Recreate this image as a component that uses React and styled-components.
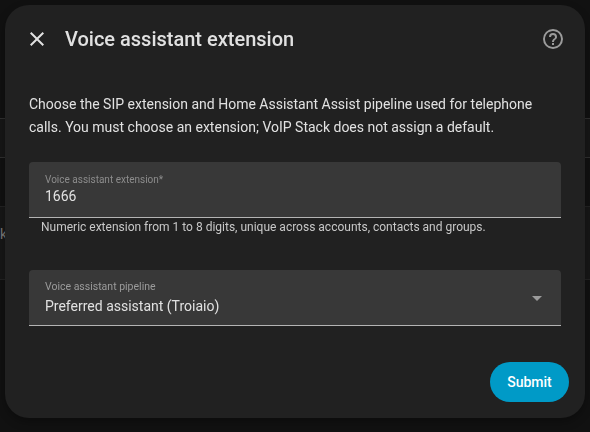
import React, { useState } from 'react';
import styled, { createGlobalStyle } from 'styled-components';

const GlobalStyle = createGlobalStyle`
  * {
    box-sizing: border-box;
  }

  body {
    margin: 0;
    background: #111;
    color: #e1e1e1;
    font-family: Roboto, "Noto Sans", sans-serif;
    overflow: hidden;
  }
`;

const Page = styled.div`
  display: flex;
  flex-direction: column;
  height: 100vh;
`;

const PageRow = styled.div`
  display: flex;
  align-items: center;
  flex: none;
  height: ${props => props.$height}px;
  background: ${props => props.$raised ? '#171717' : '#111'};
  border-bottom: 1px solid ${props => props.$line};
  color: #7a7a7a;
  font-size: 14px;
`;

const PageText = styled.span`
  margin: -18px 0 0 0;
`;

const Overlay = styled.div`
  position: fixed;
  inset: 0;
  padding: 5px 5px 14px;
  display: flex;
`;

const Dialog = styled.div`
  flex: 1;
  display: flex;
  flex-direction: column;
  background: #212121;
  border-radius: 24px;
  box-shadow: 0 4px 10px rgba(0, 0, 0, 0.3);
`;

const Header = styled.header`
  display: flex;
  align-items: center;
  height: 68px;
  padding: 0 20px;
`;

const Title = styled.h2`
  flex: 1;
  margin: 0 0 0 16px;
  font-size: 20px;
  font-weight: 500;
  line-height: 28px;
`;

const IconButton = styled.button`
  display: flex;
  padding: 0;
  border: none;
  background: none;
  color: ${props => props.$muted ? '#9b9b9b' : '#e1e1e1'};
  cursor: pointer;

  svg {
    width: 24px;
    height: 24px;
    fill: currentColor;
  }
`;

const Content = styled.div`
  display: flex;
  flex-direction: column;
  padding: 20px 24px 0;
`;

const Description = styled.p`
  margin: 0 0 23px;
  font-size: 14px;
  line-height: 23px;
`;

const Field = styled.label`
  display: flex;
  align-items: center;
  height: 56px;
  padding: 0 12px 0 16px;
  background: #383838;
  border-bottom: 1px solid #b4b4b4;
  border-radius: 4px 4px 0 0;
`;

const FieldText = styled.span`
  flex: 1;
  display: flex;
  flex-direction: column;
  padding-top: ${props => props.$offset || 0}px;
`;

const FieldLabel = styled.span`
  color: ${props => props.$compact ? '#8c8c8c' : '#9b9b9b'};
  font-size: ${props => props.$compact ? 10 : 10.5}px;
  line-height: 14px;
`;

const Input = styled.input`
  height: 18px;
  padding: 0;
  margin-bottom: 2px;
  border: none;
  outline: none;
  background: none;
  color: #e1e1e1;
  font: 14px/18px Roboto, "Noto Sans", sans-serif;
`;

const Value = styled.span`
  font-size: 14px;
  line-height: 24px;
`;

const Arrow = styled.svg`
  width: 24px;
  height: 24px;
  fill: #9b9b9b;
`;

const Helper = styled.div`
  height: 52px;
  padding: 0 12px;
  color: #c8c8c8;
  font-size: 12px;
  line-height: 18px;
`;

const Footer = styled.footer`
  display: flex;
  justify-content: flex-end;
  margin-top: auto;
  padding: 16px;
`;

const SubmitButton = styled.button`
  width: 79px;
  height: 40px;
  padding: 0;
  border: none;
  border-radius: 20px;
  background: #009ac7;
  color: #fff;
  font: 500 14px/20px Roboto, "Noto Sans", sans-serif;
  cursor: pointer;
`;

function App() {
  const [extension, setExtension] = useState('1666');

  return (
    <>
      <GlobalStyle />
      <Page>
        <PageRow $height={119} $line="#303030" />
        <PageRow $height={39} $line="#303030" $raised />
        <PageRow $height={49} $line="#232323" />
        <PageRow $height={73} $line="#232323" $raised>
          <PageText>k</PageText>
        </PageRow>
      </Page>
      <Overlay>
        <Dialog role="dialog" aria-labelledby="dialog-title">
          <Header>
            <IconButton aria-label="Close">
              <svg viewBox="0 0 24 24">
                <path d="M19,6.41L17.59,5L12,10.59L6.41,5L5,6.41L10.59,12L5,17.59L6.41,19L12,13.41L17.59,19L19,17.59L13.41,12L19,6.41Z" />
              </svg>
            </IconButton>
            <Title id="dialog-title">Voice assistant extension</Title>
            <IconButton aria-label="Help" $muted>
              <svg viewBox="0 0 24 24">
                <path d="M11,18H13V16H11V18M12,2A10,10 0 0,0 2,12A10,10 0 0,0 12,22A10,10 0 0,0 22,12A10,10 0 0,0 12,2M12,20C7.59,20 4,16.41 4,12C4,7.59 7.59,4 12,4C16.41,4 20,7.59 20,12C20,16.41 16.41,20 12,20M12,6A4,4 0 0,0 8,10H10A2,2 0 0,1 12,8A2,2 0 0,1 14,10C14,12 11,11.75 11,15H13C13,12.75 16,12.5 16,10A4,4 0 0,0 12,6Z" />
              </svg>
            </IconButton>
          </Header>
          <Content>
            <Description>
              Choose the SIP extension and Home Assistant Assist pipeline used for telephone
              calls. You must choose an extension; VoIP Stack does not assign a default.
            </Description>
            <Field>
              <FieldText>
                <FieldLabel $compact>Voice assistant extension*</FieldLabel>
                <Input value={extension} onChange={e => setExtension(e.target.value)} />
              </FieldText>
            </Field>
            <Helper>Numeric extension from 1 to 8 digits, unique across accounts, contacts and groups.</Helper>
            <Field as="div">
              <FieldText $offset={2}>
                <FieldLabel>Voice assistant pipeline</FieldLabel>
                <Value>Preferred assistant (Troiaio)</Value>
              </FieldText>
              <Arrow viewBox="0 0 24 24">
                <path d="M7,10L12,15L17,10H7Z" />
              </Arrow>
            </Field>
          </Content>
          <Footer>
            <SubmitButton>Submit</SubmitButton>
          </Footer>
        </Dialog>
      </Overlay>
    </>
  );
}

export default App;
